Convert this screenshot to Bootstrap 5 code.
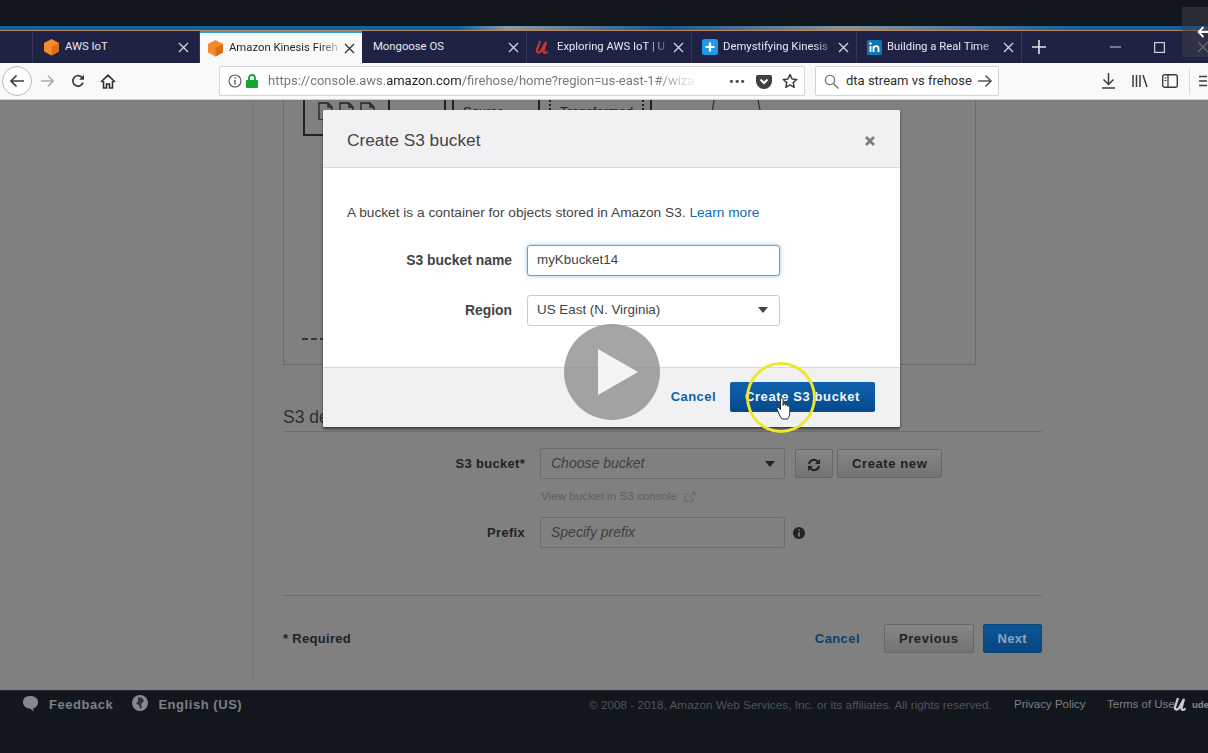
<!DOCTYPE html>
<html lang="en">
<head>
  <meta charset="UTF-8" />
  <title>Create S3 bucket</title>
  <link href="https://cdn.jsdelivr.net/npm/bootstrap@5.3.3/dist/css/bootstrap.min.css" rel="stylesheet" />
  <style>
    html, body { height: 753px; overflow: hidden; }
    body { background: #12161d; font-family: "Liberation Sans", Arial, sans-serif; position: relative; width: 1208px; }
    .top-gap { height: 26px; background: #12161d; }
    .strip { height: 5px; background: linear-gradient(90deg, #0f62a8 0, #0f62a8 38%, #8d9aa5 42%, #18598f 55%, #8a949c 70%, #0f5ea3 90%, #0f5ea3 100%); border-bottom: 1px solid #b58a5c; }

    /* browser tabs */
    .tabstrip { height: 32px; background: #1f2245; color: #e9e9ef; font-family: Roboto, sans-serif; font-size: 11.3px; }
    .tb-lead { width: 33px; border-right: 1px solid #34365a; }
    .tb { height: 32px; width: 165px; padding: 0 7px 0 10px; border-right: 1px solid #34365a; white-space: nowrap; flex: none; }
    .tb-first { width: 167px; padding-right: 10px; }
    .tb-on { width: 162px; padding-left: 7px; background: #f9f9fa; color: #1f2124; border-right: 0; border-top: 2px solid #2f9ae0; }
    .tb-plain { padding-left: 11px; }
    .tb-udemy { padding-left: 8px; }
    .tb-label { flex: 1; overflow: hidden; white-space: nowrap; padding-left: 5px; }
    .tb-fade { -webkit-mask-image: linear-gradient(90deg, #000 82%, rgba(0,0,0,.25) 98%); mask-image: linear-gradient(90deg, #000 82%, rgba(0,0,0,.25) 98%); }
    .tb-plain .tb-label { padding-left: 0; }
    .tb-x { stroke: #d6d6df; flex: none; }
    .tb-on .tb-x { stroke: #33353a; }
    .win-plus { margin-left: 10px; }
    .win-min { margin-left: 64px; }
    .win-max { margin-left: 33px; }

    /* browser toolbar */
    .toolbar { height: 37px; background: #f9f9fa; border-bottom: 1px solid #cfcfd2; padding-left: 2px; }
    .back-ring { width: 30px; height: 30px; border: 1px solid #b9b9bc; border-radius: 50%; background: #fff; }
    .ico-reload { margin-left: 16px; }
    .ico-home { margin-left: 15px; }
    .urlbar { width: 586px; height: 30px; margin-left: 103px; background: #fff; border: 1px solid #d3d3d6; border-radius: 2px; font-family: Roboto, sans-serif; font-size: 13px; color: #77787c; padding: 0 6px 0 8px; }
    .urlbar b { font-weight: 400; color: #1e1f22; }
    .url-txt { flex: 1; overflow: hidden; white-space: nowrap; padding-left: 10px; margin-right: 10px; -webkit-mask-image: linear-gradient(90deg, #000 86%, rgba(0,0,0,.15) 94%); mask-image: linear-gradient(90deg, #000 86%, rgba(0,0,0,.15) 94%); }
    .url-dots { color: #45464a; font-weight: 700; letter-spacing: 1px; line-height: 1; }
    .url-gap { margin-left: 10px; flex: none; }
    .searchbar { width: 184px; height: 30px; margin-left: 10px; background: #fff; border: 1px solid #d3d3d6; border-radius: 2px; font-family: Roboto, sans-serif; font-size: 13px; color: #2d2e31; padding: 0 5px 0 8px; }
    .search-txt { padding-left: 7px; white-space: nowrap; overflow: hidden; flex: 1; }
    .ico-dl { margin-left: 102px; }
    .ico-lib { margin-left: 16px; }
    .ico-side { margin-left: 14px; }
    .tool-sep { width: 1px; height: 26px; background: #dcdcde; margin-left: 11px; }
    .ico-menu { margin-left: 9px; }

    /* dimmed console page */
    .page-area { height: 590px; background: #808080; position: relative; overflow: hidden; }
    .side-col { width: 254px; flex: none; border-right: 1px solid #767676; height: 580px; }
    .main-col { width: 759px; margin-left: 29px; color: #222; font-size: 13px; }
    .diagram { width: 693px; height: 265px; border: 1px solid #6a6a6a; border-top: 0; position: relative; }
    .dia-box { position: absolute; left: 19px; top: 0; width: 87px; height: 36px; border: 2px solid #222; border-top: 0; }
    .dia-docs { position: absolute; left: 34px; top: 2px; }
    .dia-lbl { position: absolute; top: 2px; font-size: 13px; color: #222; }
    .dia-src { left: 179px; }
    .dia-trn { left: 276px; }
    .dia-v { position: absolute; top: 0; height: 18px; border-left: 2px solid #222; }
    .dia-d { position: absolute; top: 0; height: 18px; border-left: 2px dotted #222; }
    .dia-arc { position: absolute; left: 415px; top: 0; }
    .dia-dash { position: absolute; left: 18px; top: 238px; width: 24px; border-top: 2px dashed #333; }
    .sect-title { font-size: 17.5px; color: #2e2e2e; margin-top: 41px; border-bottom: 1px solid #6d6d6d; height: 26px; line-height: 22px; }
    .frm-row { height: 31px; }
    .frm-first { margin-top: 16px; }
    .frm-label { width: 257px; text-align: right; font-weight: 700; color: #222; padding-right: 15px; font-size: 13px; letter-spacing: .3px; }
    .dim-field { width: 245px; height: 31px; background: #808080; border: 1px solid #6c6c6c; border-radius: 2px; font-style: italic; color: #3f3f3f; padding: 0 9px 0 10px; font-size: 14px; }
    .dim-btn { height: 29px; background: linear-gradient(#868686, #737373); border: 1px solid #676767; border-radius: 2px; color: #222; font-weight: 700; font-size: 13px; letter-spacing: .6px; padding: 0 14px; line-height: 27px; }
    .dim-refresh { margin-left: 10px; padding: 0 11px; }
    .dim-new { margin-left: 4px; }
    .dim-hint { font-size: 11.7px; color: #5f5f5f; padding-left: 258px; margin-top: 8px; height: 30px; }
    .rule-line { border-top: 1px solid #6d6d6d; margin-top: 47px; }
    .frm-foot { margin-top: 28px; font-weight: 700; color: #222; letter-spacing: .3px; }
    .dim-cancel { color: #0d3f6e; font-weight: 700; letter-spacing: .4px; margin-right: 24px; }
    .dim-next { height: 29px; padding: 0 14px; line-height: 27px; background: linear-gradient(#0b5596, #084680); border: 1px solid #0a4678; border-radius: 2px; color: #8fa5ba; font-weight: 700; letter-spacing: .3px; margin-left: 9px; }

    /* console footer */
    .foot-bar { height: 63px; background: #12161d; border-top: 1px solid #23262d; color: #82858a; padding: 4px 0 0 22px; position: relative; overflow: hidden; }
    .foot-link { font-weight: 700; font-size: 13px; letter-spacing: .55px; color: #7d8084; margin-left: 10px; }
    .foot-globe { margin-left: 19px; }
    .foot-copy { font-size: 11.75px; color: #50545a; position: absolute; left: 589px; top: 5px; white-space: nowrap; }
    .foot-pp { font-size: 11.5px; color: #7e8186; position: absolute; top: 5px; white-space: nowrap; }
    .foot-privacy { left: 1014px; }
    .foot-terms { left: 1107px; }
    .foot-ulogo { position: absolute; left: 1173px; top: 6px; }
    .foot-ude { position: absolute; left: 1192px; top: 7px; font-size: 9.5px; font-weight: 700; color: #8a8d91; }

    /* modal */
    .s3-modal { position: absolute; left: 323px; top: 110px; width: 577px; height: 317px; background: #fff; border-radius: 2px; box-shadow: 0 2px 3px rgba(0,0,0,.55); overflow: hidden; }
    .s3-head { height: 58px; background: #f1f1f3; border-bottom: 1px solid #d8d8d8; padding: 4px 25px 0 24px; font-size: 17.3px; color: #444; }
    .s3-body { height: 199px; padding: 35px 24px 0; font-size: 13.7px; color: #444; }
    .s3-body a { color: #0f6cb0; text-decoration: none; }
    .s3-row1 { margin-top: 21px; }
    .s3-row2 { margin-top: 19px; }
    .s3-label { width: 180px; text-align: right; padding-right: 15px; font-weight: 700; font-size: 13.9px; color: #444; }
    .s3-input { width: 253px; height: 31px; border: 1px solid #ccc; border-radius: 3px; padding: 0 11px 0 9px; font-size: 13.4px; color: #444; background: #fff; }
    .s3-active { border-color: #5aa3d8; box-shadow: 0 0 4px rgba(60,150,220,.55); }
    .s3-foot { height: 60px; background: #f1f1f3; border-top: 1px solid #d8d8d8; padding: 14px 25px 0 0; }
    .s3-cancel { color: #0f62a8; font-weight: 700; font-size: 13px; letter-spacing: .45px; margin-right: 14px; line-height: 30px; }
    .s3-create { width: 145px; height: 30px; background: linear-gradient(#0e62ad, #07498f); border-radius: 2px; color: #f2f6fa; font-weight: 700; font-size: 13px; letter-spacing: .6px; text-align: center; line-height: 30px; }

    /* video overlay */
    .play-disc { position: absolute; left: 564px; top: 324px; width: 96px; height: 96px; border-radius: 50%; background: rgba(140,140,142,.78); }
    .play-tri { margin-left: 12px; }
    .click-ring { position: absolute; left: 746px; top: 362px; width: 70px; height: 71px; border: 3px solid #ece62e; border-radius: 50%; }
    .cursor-hand { position: absolute; left: 776px; top: 396px; }
    .corner-box { position: absolute; left: 1182px; top: 7px; width: 26px; height: 50px; background: rgba(60,64,72,.55); }
    .corner-back { position: absolute; left: 1197px; top: 26px; }
    .corner-x { position: absolute; left: 1198px; top: 42px; }
  </style>
</head>
<body>
  <div class="top-gap"></div>
  <div class="strip"></div>

  <!-- tabs -->
  <div class="tabstrip d-flex">
    <div class="tb-lead"></div>
    <div class="tb tb-first d-flex align-items-center">
      <svg width="17" height="18" viewBox="0 0 17 18"><path d="M8.5 1 16 5v8.500l-7.500 4L1 13.500V5z" fill="#f58b2b"/><path d="M8.500 9 16 5v8.500l-7.500 4z" fill="#d96f17"/></svg>
      <span class="tb-label">AWS IoT</span>
      <svg class="tb-x" width="11" height="11" viewBox="0 0 11 11"><path d="M1 1l9 9M10 1l-9 9" stroke-width="1.300"/></svg>
    </div>
    <div class="tb tb-on d-flex align-items-center">
      <svg width="17" height="18" viewBox="0 0 17 18"><path d="M8.500 1 16 5v8.500l-7.500 4L1 13.500V5z" fill="#f58b2b"/><path d="M8.500 9 16 5v8.500l-7.500 4z" fill="#d96f17"/></svg>
      <span class="tb-label tb-fade">Amazon Kinesis Fireh</span>
      <svg class="tb-x ms-1" width="11" height="11" viewBox="0 0 11 11"><path d="M1 1l9 9M10 1l-9 9" stroke-width="1.400"/></svg>
    </div>
    <div class="tb tb-plain d-flex align-items-center">
      <span class="tb-label">Mongoose OS</span>
      <svg class="tb-x" width="11" height="11" viewBox="0 0 11 11"><path d="M1 1l9 9M10 1l-9 9" stroke-width="1.300"/></svg>
    </div>
    <div class="tb tb-udemy d-flex align-items-center">
      <svg width="17" height="15" viewBox="0 0 17 15"><path d="M5 1 2 10c-.6 2.500 2.500 3.500 4 1l5-9-2.500 9c-.3 2 2 2.500 4 .5" fill="none" stroke="#c0392b" stroke-width="2.300"/></svg>
      <span class="tb-label tb-fade">Exploring AWS IoT | U</span>
      <svg class="tb-x ms-1" width="11" height="11" viewBox="0 0 11 11"><path d="M1 1l9 9M10 1l-9 9" stroke-width="1.300"/></svg>
    </div>
    <div class="tb d-flex align-items-center">
      <svg width="16" height="16" viewBox="0 0 16 16"><rect width="16" height="16" rx="2.500" fill="#1e9be8"/><path d="M8 3.500v9M3.500 8h9" stroke="#fff" stroke-width="2.200"/></svg>
      <span class="tb-label tb-fade">Demystifying Kinesis</span>
      <svg class="tb-x ms-1" width="11" height="11" viewBox="0 0 11 11"><path d="M1 1l9 9M10 1l-9 9" stroke-width="1.300"/></svg>
    </div>
    <div class="tb d-flex align-items-center">
      <svg width="15" height="15" viewBox="0 0 15 15"><rect width="15" height="15" rx="1.500" fill="#0d77b5"/><path d="M3.500 6v6M6.500 12V6M6.500 8.500c.5-3 5-3.500 5 0V12" stroke="#fff" stroke-width="1.800" fill="none"/><circle cx="3.500" cy="3.500" r="1.200" fill="#fff"/></svg>
      <span class="tb-label tb-fade">Building a Real Time</span>
      <svg class="tb-x ms-1" width="11" height="11" viewBox="0 0 11 11"><path d="M1 1l9 9M10 1l-9 9" stroke-width="1.300"/></svg>
    </div>
    <svg class="win-plus align-self-center" width="14" height="14" viewBox="0 0 14 14"><path d="M7 0v14M0 7h14" stroke="#e4e4ea" stroke-width="1.600"/></svg>
    <svg class="win-min align-self-center" width="11" height="2" viewBox="0 0 11 2"><path d="M0 1h11" stroke="#b5b5c3" stroke-width="1.200"/></svg>
    <svg class="win-max align-self-center" width="11" height="11" viewBox="0 0 11 11"><rect x=".6" y=".6" width="9.800" height="9.800" fill="none" stroke="#d0d0da" stroke-width="1.200"/></svg>
  </div>

  <!-- browser toolbar -->
  <div class="toolbar d-flex align-items-center">
    <div class="back-ring d-flex align-items-center justify-content-center">
      <svg width="16" height="14" viewBox="0 0 16 14"><path d="M15 7H2M7.500 1.500 2 7l5.500 5.500" fill="none" stroke="#3c3d40" stroke-width="1.700"/></svg>
    </div>
    <svg class="ms-2" width="15" height="14" viewBox="0 0 16 14"><path d="M1 7h13M8.500 1.500 14 7l-5.500 5.500" fill="none" stroke="#a9a9ac" stroke-width="1.600"/></svg>
    <svg class="ico-reload" width="14" height="14" viewBox="0 0 14 14"><path d="M12 8.500A5.200 5.200 0 1 1 10.500 3L12.500 5" fill="none" stroke="#3c3d40" stroke-width="1.700"/><path d="M13 .8v5H8z" fill="#3c3d40"/></svg>
    <svg class="ico-home" width="16" height="15" viewBox="0 0 16 15"><path d="M1 8 8 1.200 15 8M3.500 7v7h3v-4h3v4h3V7" fill="none" stroke="#2f3033" stroke-width="1.600"/></svg>
    <div class="urlbar d-flex align-items-center">
      <svg width="14" height="14" viewBox="0 0 14 14"><circle cx="7" cy="7" r="6" fill="none" stroke="#58595c" stroke-width="1.100"/><path d="M7 6v4.500M7 3.200v1.500" stroke="#58595c" stroke-width="1.400"/></svg>
      <svg class="ms-1" width="12" height="14" viewBox="0 0 12 14"><rect y="6" width="12" height="8" rx="1" fill="#12a52f"/><path d="M3 6.500V4a3 3 0 0 1 6 0v2.500" fill="none" stroke="#12a52f" stroke-width="1.800"/></svg>
      <div class="url-txt">https://console.aws.<b>amazon.com</b>/firehose/home?region=us-east-1#/wiza</div>
      <span class="url-dots">•••</span>
      <svg class="url-gap" width="16" height="15" viewBox="0 0 16 15"><path d="M1.500 1h13A1.500 1.500 0 0 1 16 2.500V7A8 8 0 0 1 0 7V2.500A1.500 1.500 0 0 1 1.500 1z" fill="#3f4043"/><path d="M4.500 5.500 8 9l3.500-3.500" fill="none" stroke="#fff" stroke-width="2"/></svg>
      <svg class="url-gap" width="16" height="16" viewBox="0 0 16 16"><path d="M8 1.500l2 4.400 4.700.5-3.500 3.200 1 4.700L8 11.900l-4.200 2.400 1-4.700L1.300 6.400 6 5.900z" fill="none" stroke="#3c3d40" stroke-width="1.500" stroke-linejoin="round"/></svg>
    </div>
    <div class="searchbar d-flex align-items-center">
      <svg width="15" height="15" viewBox="0 0 15 15"><circle cx="6" cy="6" r="4.600" fill="none" stroke="#77787c" stroke-width="1.400"/><path d="M9.500 9.500 14.500 14.500" stroke="#77787c" stroke-width="1.500"/></svg>
      <span class="search-txt">dta stream vs frehose</span>
      <svg width="16" height="14" viewBox="0 0 16 14"><path d="M1 7h13M8.500 1.500 14 7l-5.500 5.500" fill="none" stroke="#55565a" stroke-width="1.500"/></svg>
    </div>
    <svg class="ico-dl" width="15" height="16" viewBox="0 0 15 16"><path d="M7.500 0v11M2.500 6.500l5 5 5-5M1 15h13" fill="none" stroke="#3c3d40" stroke-width="1.500"/></svg>
    <svg class="ico-lib" width="16" height="14" viewBox="0 0 16 14"><path d="M1 1v12M4.500 1v12M8 1v12M11 1l4 12" fill="none" stroke="#3c3d40" stroke-width="1.500"/></svg>
    <svg class="ico-side" width="16" height="14" viewBox="0 0 16 14"><rect x=".7" y=".7" width="14.600" height="12.600" rx="2" fill="none" stroke="#3c3d40" stroke-width="1.400"/><path d="M6 1v12" stroke="#3c3d40" stroke-width="1.300"/><path d="M2.500 4H4.500M2.500 6.500H4.500" stroke="#3c3d40"/></svg>
    <div class="tool-sep"></div>
    <svg class="ico-menu" width="8" height="12" viewBox="0 0 8 12"><path d="M0 1.500h8M0 6h8M0 10.500h8" stroke="#3c3d40" stroke-width="1.500"/></svg>
  </div>

  <!-- dimmed console page -->
  <div class="page-area d-flex">
    <div class="side-col"></div>
    <div class="main-col">
      <div class="diagram">
        <div class="dia-box"></div>
        <svg class="dia-docs" width="58" height="18" viewBox="0 0 58 18"><path d="M1 18V1h9l4 4v13M1 18h13M10 1v4h4M22 14V1h9l4 4v9M31 1v4h4M43 14V1h9l4 4v9M52 1v4h4" fill="none" stroke="#222" stroke-width="1.300"/></svg>
        <div class="dia-lbl dia-src">Source</div>
        <div class="dia-lbl dia-trn">Transformed</div>
        <div class="dia-v" style="left:160px"></div>
        <div class="dia-v" style="left:168px"></div>
        <div class="dia-v" style="left:254px"></div>
        <div class="dia-d" style="left:265px"></div>
        <div class="dia-d" style="left:358px"></div>
        <div class="dia-v" style="left:366px"></div>
        <svg class="dia-arc" width="70" height="20" viewBox="0 0 70 20"><path d="M12 20 15 0M59 0l4 20" fill="none" stroke="#333" stroke-width="1.300"/></svg>
        <div class="dia-dash"></div>
      </div>
      <div class="sect-title">S3 destination</div>
      <div class="frm-row frm-first d-flex align-items-center">
        <div class="frm-label">S3 bucket*</div>
        <div class="dim-field d-flex align-items-center justify-content-between">
          <span>Choose bucket</span>
          <svg width="10" height="6" viewBox="0 0 10 6"><path d="M0 0h10L5 6z" fill="#222"/></svg>
        </div>
        <div class="dim-btn dim-refresh"><svg width="14" height="14" viewBox="0 0 14 14"><path d="M2 6a5 5 0 0 1 9-2l1.500 1.500M12 8a5 5 0 0 1-9 2L1.500 8.500" fill="none" stroke="#222" stroke-width="2"/><path d="M13 1v5H8zM1 13V8h5z" fill="#222"/></svg></div>
        <div class="dim-btn dim-new">Create new</div>
      </div>
      <div class="dim-hint">View bucket in S3 console
        <svg class="ms-1" width="12" height="11" viewBox="0 0 12 11"><path d="M9 6.500V10H1V3h4M6 6l5-5M7.500 1H11v3.500" fill="none" stroke="#666" stroke-width="1"/></svg>
      </div>
      <div class="frm-row d-flex align-items-center">
        <div class="frm-label">Prefix</div>
        <div class="dim-field d-flex align-items-center">Specify prefix</div>
        <svg class="ms-2" width="12" height="14" viewBox="0 0 14 14"><circle cx="7" cy="7" r="7" fill="#222"/><path d="M7 6v5M7 2.500v2" stroke="#808080" stroke-width="2"/></svg>
      </div>
      <div class="rule-line"></div>
      <div class="frm-foot d-flex justify-content-between align-items-center">
        <span>* Required</span>
        <div class="d-flex align-items-center">
          <span class="dim-cancel">Cancel</span>
          <div class="dim-btn">Previous</div>
          <div class="dim-next">Next</div>
        </div>
      </div>
    </div>
  </div>

  <!-- console footer -->
  <div class="foot-bar d-flex align-items-start">
    <svg width="17" height="17" viewBox="0 0 17 17"><path d="M8.500 1C13 1 16 3.500 16 7s-2.500 6-5 6.500l1 3-4-3C4 13.500 1 11 1 7s3-6 7.500-6z" fill="#85888c"/></svg>
    <span class="foot-link">Feedback</span>
    <svg class="foot-globe" width="16" height="16" viewBox="0 0 16 16"><circle cx="8" cy="8" r="8" fill="#85888c"/><path d="M6 2l4 1 2 3-3 3 1 3-2 2-1-4-3-1 2-3z" fill="#12161d" opacity=".75"/></svg>
    <span class="foot-link">English (US)</span>
    <span class="foot-copy">© 2008 - 2018, Amazon Web Services, Inc. or its affiliates. All rights reserved.</span>
    <span class="foot-pp foot-privacy">Privacy Policy</span>
    <span class="foot-pp foot-terms">Terms of Use</span>
    <svg class="foot-ulogo" width="17" height="15" viewBox="0 0 17 15"><path d="M5 1 2 10c-.6 2.500 2.500 3.500 4 1l5-9-2.500 9c-.3 2 2 2.500 4 .5" fill="none" stroke="#c9cbce" stroke-width="2.300"/></svg>
    <span class="foot-ude">ude</span>
  </div>

  <!-- modal -->
  <div class="s3-modal">
    <div class="s3-head d-flex align-items-center justify-content-between">
      <span>Create S3 bucket</span>
      <svg width="10" height="10" viewBox="0 0 10 10"><path d="M1 1l8 8M9 1l-8 8" stroke="#7d7d7d" stroke-width="2.600"/></svg>
    </div>
    <div class="s3-body">
      <div>A bucket is a container for objects stored in Amazon S3. <a href="#">Learn more</a></div>
      <div class="s3-row1 d-flex align-items-center">
        <div class="s3-label">S3 bucket name</div>
        <div class="s3-input s3-active d-flex align-items-center">myKbucket14</div>
      </div>
      <div class="s3-row2 d-flex align-items-center">
        <div class="s3-label">Region</div>
        <div class="s3-input d-flex align-items-center justify-content-between">
          <span>US East (N. Virginia)</span>
          <svg width="10" height="6" viewBox="0 0 10 6"><path d="M0 0h10L5 6z" fill="#444"/></svg>
        </div>
      </div>
    </div>
    <div class="s3-foot d-flex justify-content-end align-items-start">
      <span class="s3-cancel">Cancel</span>
      <div class="s3-create">Create S3 bucket</div>
    </div>
  </div>

  <!-- video overlay -->
  <div class="play-disc d-flex align-items-center justify-content-center">
    <svg class="play-tri" width="40" height="46" viewBox="0 0 40 46"><path d="M0 0 40 23 0 46z" fill="#f4f4f5"/></svg>
  </div>
  <div class="click-ring"></div>
  <svg class="cursor-hand" width="15" height="24" viewBox="0 0 15 24"><path d="M4 20 1 13c-.6-1.500 1-2.500 2-1.200l1.500 2V3a1.300 1.300 0 0 1 2.600 0v6.500-1a1.200 1.200 0 0 1 2.300 0v1a1.200 1.200 0 0 1 2.300 0v1a1.100 1.100 0 0 1 2.100.5V16c0 3-1 5-2 7H6z" fill="#fff" stroke="#333" stroke-width="1"/></svg>
  <div class="corner-box"></div>
  <svg class="corner-back" width="11" height="12" viewBox="0 0 11 12"><path d="M11 6H1.500M6.500 1 1.500 6l5 5" fill="none" stroke="#fff" stroke-width="1.800"/></svg>
  <svg class="corner-x" width="10" height="10" viewBox="0 0 10 10"><path d="M0 0l10 10M10 0 0 10" stroke="#6d7079" stroke-width="1.200"/></svg>
  <script src="https://cdn.jsdelivr.net/npm/bootstrap@5.3.3/dist/js/bootstrap.bundle.min.js"></script>
</body>
</html>
